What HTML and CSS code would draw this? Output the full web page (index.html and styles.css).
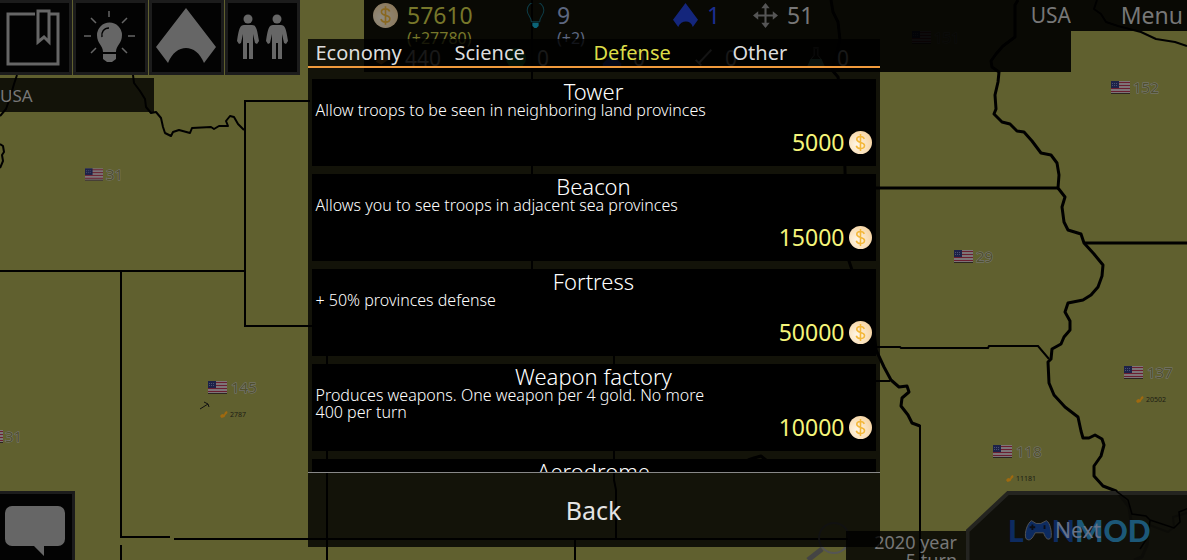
FILE: index.html
```html
<!DOCTYPE html>
<html lang="en">
<head>
    <meta charset="UTF-8">
    <meta name="viewport" content="width=device-width, initial-scale=1.0">
    <title>Buildings</title>
    <link rel="stylesheet" href="styles.css">
</head>
<body>
    <svg class="defs" width="0" height="0" aria-hidden="true">
        <defs>
            <radialGradient id="gold" cx="0.35" cy="0.6" r="0.7">
                <stop offset="0" stop-color="#fff6e6"/>
                <stop offset="1" stop-color="#f6d3a0"/>
            </radialGradient>
        </defs>
        <symbol id="coin" viewBox="0 0 24 24">
            <circle cx="12" cy="12" r="12" fill="url(#gold)"/>
            <path d="M16 8.200c-.6-1.600-2-2.500-4-2.500-2.300 0-3.900 1.200-3.900 3 0 4.300 8.100 2.100 8.100 6.400 0 1.900-1.700 3.200-4.200 3.200-2.300 0-3.900-1-4.400-2.900M12 3.200v17.600" fill="none" stroke="#f3b73a" stroke-width="1.600"/>
        </symbol>
        <symbol id="flag" viewBox="0 0 19 13">
            <rect width="19" height="13" fill="#7d7478"/>
            <path d="M0 1.500h19M0 4.500h19M0 7.500h19M0 10.500h19" stroke="#6b1f30"/>
            <rect width="8" height="7" fill="#1d2249"/>
            <path d="M1 2.500h6M1 4.500h6" stroke="#4b5070" stroke-dasharray="1 1"/>
            <path d="M0 12.500h19" stroke="#2c2520"/>
        </symbol>
        <symbol id="nugget" viewBox="0 0 8 7">
            <path d="M0 5l2-2 2 .500L5 1l2-1 .500 2-2 2-1 2-3 1z" fill="#a0690f"/>
        </symbol>
    </svg>

    <div class="game">
        <svg class="map" viewBox="0 0 1187 560" preserveAspectRatio="xMidYMid slice">
            <!-- straight borders -->
            <g class="border">
                <path d="M310 101H245V326H327V560"/>
                <path d="M0 271H245M121 271V537H170M121 545V560"/>
                <path d="M174 539H850M575 539V560M532 0V270M614 340V480L616 490V539"/>
                <path d="M876 347H900L901 348H988L989 346H1038L1049 359M876 381H890M920 425V560"/>
            </g>
            <!-- rivers -->
            <g class="border river">
                <path d="M876 188H1058M1084 243H1187"/>
                <path d="M831 0L833 12 838 22 840 40 832 70 838 77 842 100 845 170 847 255 852 270 872 310 876 350 884 367 891 380 899 387 907 386 909 392 902 398 901 406 908 415 912 423 920 426"/>
                <path d="M1018 0L1015 5V37L1003 46 996 54 991 61 992 67 999 72 998 82 995 95 996 109 994 114 1002 122 1010 124 1017 131 1024 132 1032 141 1041 153 1051 155 1057 163 1059 175 1058 188 1065 197 1062 207 1064 222 1068 230 1081 234 1084 243 1094 254 1103 265 1102 276 1098 287 1091 295 1083 300 1068 303 1065 312 1070 321 1070 330 1064 337 1061 344 1052 349 1051 359 1048 362 1049 383 1054 395 1065 407 1078 417 1081 431 1083 438 1089 438 1095 435 1102 439 1104 445 1101 456 1094 466 1094 476 1103 486 1116 491 1122 498 1129 507 1131 521 1144 523 1149 527 1147 545 1142 557 1134 560"/>
                <path d="M17 75L14 84 10 98 6 109 0 116M0 144l3 2 1 6-2 3 1 6-3 7" class="thin"/>
                <path d="M133 75L134 83 140 91 145 99 146 107 151 113 156 112 161 118 163 127 165 133 171 136 173 132 179 130 190 133 192 128 211 127 214 129 219 126 228 126 226 121 230 116 234 117 238 124 244 130" class="thin"/>
                <path d="M1097 0L1094 9 1101 14 1106 22 1118 26 1141 32 1156 39 1175 42 1187 46" class="thin"/>
                <path d="M1144 523L1168 532 1174 527 1173 517 1187 513" class="thin"/>
                <path d="M748 460l6-2 7-2 5 4"/>
            </g>

            <g class="troops">
                <use href="#flag" x="85" y="168" width="18" height="13"/><text x="106" y="180">31</text>
                <use href="#flag" x="1111" y="81" width="19" height="13"/><text x="1133" y="93">152</text>
                <use href="#flag" x="954" y="250" width="19" height="13"/><text x="976" y="262">29</text>
                <use href="#flag" x="208" y="381" width="19" height="13"/><text x="231" y="393">145</text>
                <use href="#flag" x="-16" y="430" width="19" height="13"/><text x="5" y="442">31</text>
                <use href="#flag" x="1124" y="366" width="19" height="13"/><text x="1147" y="378">137</text>
                <use href="#flag" x="993" y="445" width="19" height="13"/><text x="1016" y="457">118</text>
                <use href="#flag" x="912" y="31" width="19" height="13"/><text x="934" y="43">151</text>
            </g>
            <g class="gold">
                <use href="#nugget" x="220" y="411" width="8" height="7"/><text x="230" y="417">2787</text>
                <use href="#nugget" x="1136" y="396" width="8" height="7"/><text x="1146" y="402">20502</text>
                <use href="#nugget" x="1006" y="475" width="8" height="7"/><text x="1016" y="481">11181</text>
            </g>
            <path d="M200 409l8-5M204 402l4 2 1 3" fill="none" stroke="#111"/>
        </svg>

        <div class="hud">
            <div class="left">
                <div class="tools">
                    <button class="tool" aria-label="Journal">
                        <svg viewBox="0 0 75 75"><path d="M38 14H11V64H61V14H53" fill="none" stroke="#666" stroke-width="3"/><path d="M41 11H52V42L47 37 41 42Z" fill="none" stroke="#666" stroke-width="3"/></svg>
                    </button>
                    <button class="tool" aria-label="Science">
                        <svg viewBox="0 0 75 75"><path d="M30 52c0-7-6-8-6-17a12.500 12.500 0 0 1 25 0c0 9-6 10-6 17z" fill="#666"/><path d="M29 37c-1-5 2-9 7-9" fill="none" stroke="#000" stroke-width="1.500"/><path d="M30 54H43V59L39 62H34L30 59Z" fill="#666"/><path d="M36 11v6M18 18l5 5M54 18l-5 5M11 36h7M55 36h7M18 53l5-5M54 53l-5-5" stroke="#666" stroke-width="1.500"/></svg>
                    </button>
                    <button class="tool" aria-label="Army">
                        <svg viewBox="0 0 75 75"><path d="M37 8L67 47 55 63C47 43 27 43 19 63L7 47Z" fill="#666"/></svg>
                    </button>
                    <button class="tool" aria-label="Population">
                        <svg viewBox="0 0 75 75">
                            <g id="man" fill="#666"><circle cx="23" cy="19" r="4.500"/><path d="M19 25h8c4 0 5 3 7 16l-2 3-2-1-2-9v25h-4V43h-2v16h-4V34l-2 9-2 1-2-3c2-13 3-16 7-16z"/></g>
                            <use href="#man" x="29"/>
                        </svg>
                    </button>
                </div>
                <div class="place">USA</div>
            </div>

            <div class="panel">
                <div class="stats">
                    <div class="stat money">
                        <svg class="icon dim" viewBox="0 0 24 24"><use href="#coin"/></svg>
                        <span class="value">57610</span>
                        <span class="income">(+27780)</span>
                    </div>
                    <div class="stat science">
                        <svg class="icon" viewBox="0 0 24 24"><path d="M8 18c0-5-4-6-4-11a8 8 0 0 1 16 0c0 5-4 6-4 11z" fill="none" stroke="#0d3b45"/><path d="M9 19h6v3l-2 2h-2l-2-2z" fill="#0b6478"/></svg>
                        <span class="value">9</span>
                        <span class="income">(+2)</span>
                    </div>
                    <div class="stat army">
                        <svg class="icon" viewBox="0 0 24 24"><path d="M12 0L24 16 19 23C17 16 8 16 5 23L0 16Z" fill="#14267c"/></svg>
                        <span class="value">1</span>
                    </div>
                    <div class="stat moves">
                        <svg class="icon" viewBox="0 0 24 24"><path d="M12 2v20M2 12h20" stroke="#555" stroke-width="2"/><path d="M12 0l4 5H8zM12 24l4-5H8zM0 12l5-4v8zM24 12l-5-4v8z" fill="#555"/></svg>
                        <span class="value">51</span>
                    </div>
                    <div class="owner">USA</div>
                </div>
                <div class="stock">
                    <div class="res"><svg class="small" viewBox="0 0 24 24"><path d="M3 16l6-8 8-4 4 2-4 8-8 5z" fill="#7a4d10"/></svg>440</div>
                    <div class="res wide"><svg class="small" viewBox="0 0 24 24"><circle cx="12" cy="12" r="11" fill="#0c5a26"/></svg>0</div>
                    <div class="res"><svg class="small" viewBox="0 0 24 24"><path d="M2 18L12 8l10 10v4H2z" fill="#14267c"/></svg>0</div>
                    <div class="res"><svg class="small" viewBox="0 0 24 24"><path d="M20 3L6 18M3 14l6 6" stroke="#666" stroke-width="2"/></svg>0</div>
                    <div class="res wide"><svg class="small" viewBox="0 0 24 24"><path d="M9 1h6M10 2v7L6 14h12L14 9V2" fill="none" stroke="#444"/><path d="M6 13h12l4 9H2z" fill="#2f5a4c"/></svg>0</div>
                </div>
            </div>
            <button class="menu">Menu</button>
        </div>

        <button class="chat" aria-label="Chat">
            <svg viewBox="0 0 75 68"><path d="M12 14H58a7 7 0 0 1 7 7V47a7 7 0 0 1-7 7H44V64L34 54H12a7 7 0 0 1-7-7V21a7 7 0 0 1 7-7z" fill="#666"/></svg>
        </button>

        <svg class="search" viewBox="0 0 56 40"><circle cx="36" cy="18" r="15" fill="none" stroke="#555" stroke-width="2"/><path d="M24 29L10 40" stroke="#444" stroke-width="5"/></svg>

        <div class="turn">
            <div class="date">2020 year<br>5 turn</div>
            <button class="next">
                <svg class="shape" viewBox="0 0 221 69" preserveAspectRatio="none"><path d="M1.500 75V40L42 2H225V75Z" fill="#0d0d08" fill-opacity="0.960" stroke="#242420" stroke-width="4"/><path d="M150 0l12 9 4 14 14 2 4 4-2 17-8 12M184 29l24 8 6-6-1-10 10-4" fill="none" stroke="#000" stroke-width="1.500"/></svg>
                <span class="logo"><span class="dark">L</span><svg class="pad" viewBox="0 0 30 24"><path d="M8 2l5 3h5l6-3c4 2 6 12 5 18-3 4-6 1-8-5h-9c-3 6-6 10-10 6C0 15 4 4 8 2z" fill="#0d2b60" stroke="#555" /><path d="M9 6v6M6 9h6M22 7v4" stroke="#0b0d14" stroke-width="2"/></svg><span class="dark">N</span><span>MOD</span></span>
                <span class="label">Next</span>
            </button>
        </div>

        <div class="shop">
            <div class="tabs">
                <button class="tab">Economy</button>
                <button class="tab">Science</button>
                <button class="tab active">Defense</button>
                <button class="tab">Other</button>
            </div>
            <div class="list">
                <div class="item">
                    <h3>Tower</h3>
                    <p>Allow troops to be seen in neighboring land provinces</p>
                    <div class="price">5000 <svg class="coin"><use href="#coin"/></svg></div>
                </div>
                <div class="item">
                    <h3>Beacon</h3>
                    <p>Allows you to see troops in adjacent sea provinces</p>
                    <div class="price">15000 <svg class="coin"><use href="#coin"/></svg></div>
                </div>
                <div class="item">
                    <h3>Fortress</h3>
                    <p>+ 50% provinces defense</p>
                    <div class="price">50000 <svg class="coin"><use href="#coin"/></svg></div>
                </div>
                <div class="item">
                    <h3>Weapon factory</h3>
                    <p>Produces weapons. One weapon per 4 gold. No more 400 per turn</p>
                    <div class="price">10000 <svg class="coin"><use href="#coin"/></svg></div>
                </div>
                <div class="item">
                    <h3>Aerodrome</h3>
                </div>
            </div>
            <button class="back">Back</button>
        </div>
    </div>
</body>
</html>
```

FILE: styles.css
```css
*{
    box-sizing: border-box;
}
body{
    margin: 0;
    background-color: #60602f;
    font-family: "Noto Sans", "Open Sans", sans-serif;
    color: #777;
}
button{
    border: 0;
    padding: 0;
    background: none;
    color: inherit;
    font: inherit;
    cursor: pointer;
}
.defs{
    position: absolute;
}
.game{
    position: relative;
    height: 100vh;
    overflow: hidden;
}

/* map */
.map{
    position: absolute;
    width: 100%;
    height: 100%;
}
.border{
    fill: none;
    stroke: #000;
    stroke-width: 2;
}
.river{
    stroke-width: 3;
    stroke-linejoin: round;
}
.thin{
    stroke-width: 2;
}
.troops text{
    font-size: 15px;
    fill: #50502c;
    stroke: #7c7c80;
    stroke-width: 1;
    paint-order: stroke;
}
.gold text{
    font-size: 7px;
    fill: #1c1c14;
}

/* top panel */
.hud{
    position: absolute;
    top: 0;
    left: 0;
    right: 0;
    display: flex;
    align-items: flex-start;
}
.left{
    width: 364px;
}
.tools{
    display: flex;
    gap: 1px;
    margin-left: -3px;
}
.tool{
    width: 75px;
    height: 75px;
    background-color: #030303;
    border: 3px solid #1c1c1c;
}
.tool svg{
    display: block;
    width: 75px;
    height: 75px;
    margin: -3px;
}
.place{
    width: 154px;
    height: 34px;
    margin-top: 3px;
    font-size: 17px;
    line-height: 36px;
    background-color: rgba(0,0,0,0.8);
}
.panel{
    flex: 1;
    height: 72px;
    padding-left: 9px;
    background-color: rgba(0,0,0,0.9);
}
.stats{
    display: flex;
    height: 46px;
}
.stat{
    display: grid;
    grid-template-columns: 34px 1fr;
    grid-template-rows: 30px 16px;
    align-items: center;
    width: 150px;
}
.icon{
    width: 25px;
    height: 25px;
}
.dim{
    opacity: 0.550;
}
.value{
    font-size: 23px;
    line-height: 30px;
}
.income{
    grid-column: 2;
    font-size: 16px;
    line-height: 16px;
}
.money{
    color: #77772a;
}
.science{
    color: #5d6780;
}
.army{
    width: 80px;
    color: #1c2f92;
}
.moves{
    width: 140px;
}
.owner{
    margin-left: auto;
    font-size: 21px;
    line-height: 30px;
}
.stock{
    display: flex;
    gap: 12px;
}
.res{
    display: flex;
    align-items: center;
    gap: 10px;
    width: 80px;
    font-size: 21px;
    line-height: 24px;
    color: #777;
}
.res:first-child{
    width: 120px;
}
.res.wide{
    width: 84px;
}
.res:last-child{
    margin-left: 20px;
}
.small{
    width: 22px;
    height: 22px;
}
.menu{
    width: 116px;
    height: 31px;
    padding-right: 4px;
    text-align: right;
    font-size: 23px;
    line-height: 31px;
    background-color: rgba(0,0,0,0.9);
}

/* bottom corners */
.chat{
    position: absolute;
    left: 0;
    bottom: 0;
    width: 75px;
    height: 69px;
    background-color: #030303;
    border: 3px solid #1c1c1c;
    border-left: 0;
    border-bottom: 0;
}
.chat svg{
    display: block;
    width: 75px;
    height: 68px;
    margin-top: -3px;
}
.search{
    position: absolute;
    right: 333px;
    bottom: 0;
    width: 56px;
    height: 40px;
}
.turn{
    position: absolute;
    right: 0;
    bottom: 0;
    display: flex;
    align-items: flex-end;
}
.date{
    width: 120px;
    height: 29px;
    padding: 2px 9px 0 0;
    text-align: right;
    font-size: 18px;
    line-height: 18px;
    overflow: hidden;
    background-color: rgba(0,0,0,0.8);
}
.next{
    position: relative;
    width: 221px;
    height: 69px;
    overflow: hidden;
}
.shape{
    display: block;
    width: 100%;
    height: 100%;
}
.logo{
    position: absolute;
    left: 42px;
    top: 22px;
    display: flex;
    align-items: center;
    color: #1c5878;
    font: 900 30px/34px Lato, sans-serif;
}
.dark{
    color: #0d2b60;
}
.pad{
    width: 28px;
    height: 24px;
}
.label{
    position: absolute;
    left: 89px;
    top: 22px;
    font-size: 21px;
    line-height: 34px;
    color: #66728a;
}

/* building list window */
.shop{
    position: absolute;
    top: 39px;
    bottom: 13px;
    left: 50%;
    width: 572px;
    margin-left: -286px;
    display: flex;
    flex-direction: column;
    background-color: rgba(0,0,0,0.8);
    color: #fff;
}
.tabs{
    display: grid;
    grid-template-columns: repeat(4, 1fr);
    padding: 0 8px;
    border-bottom: 2px solid #f09a3c;
}
.tab{
    height: 27px;
    text-align: left;
    font-size: 20px;
    line-height: 28px;
    color: #ddd;
}
.tab.active{
    color: #dcdc48;
}
.list{
    flex: 1;
    min-height: 0;
    display: flex;
    flex-direction: column;
    gap: 8px;
    padding: 11px 4px 0;
    overflow: hidden;
}
.item{
    flex: none;
    display: grid;
    grid-template-columns: 400px 1fr;
    grid-template-rows: 23px 1fr;
    height: 87px;
    padding: 0 4px;
    background-color: #000;
}
.item h3{
    grid-column: 1 / 3;
    margin: 0;
    text-align: center;
    font-size: 22px;
    font-weight: 350;
    line-height: 24px;
}
.item p{
    margin: 0;
    font-size: 16px;
    font-weight: 300;
    line-height: 17px;
}
.price{
    display: flex;
    align-items: center;
    align-self: end;
    justify-content: flex-end;
    gap: 4px;
    margin-bottom: 9px;
    font-size: 23px;
    line-height: 30px;
    color: #f5f57a;
}
.coin{
    width: 23px;
    height: 23px;
}
.back{
    height: 75px;
    border-top: 1px solid #888;
    font-size: 25px;
    line-height: 72px;
    color: #e4e4e4;
}
```
